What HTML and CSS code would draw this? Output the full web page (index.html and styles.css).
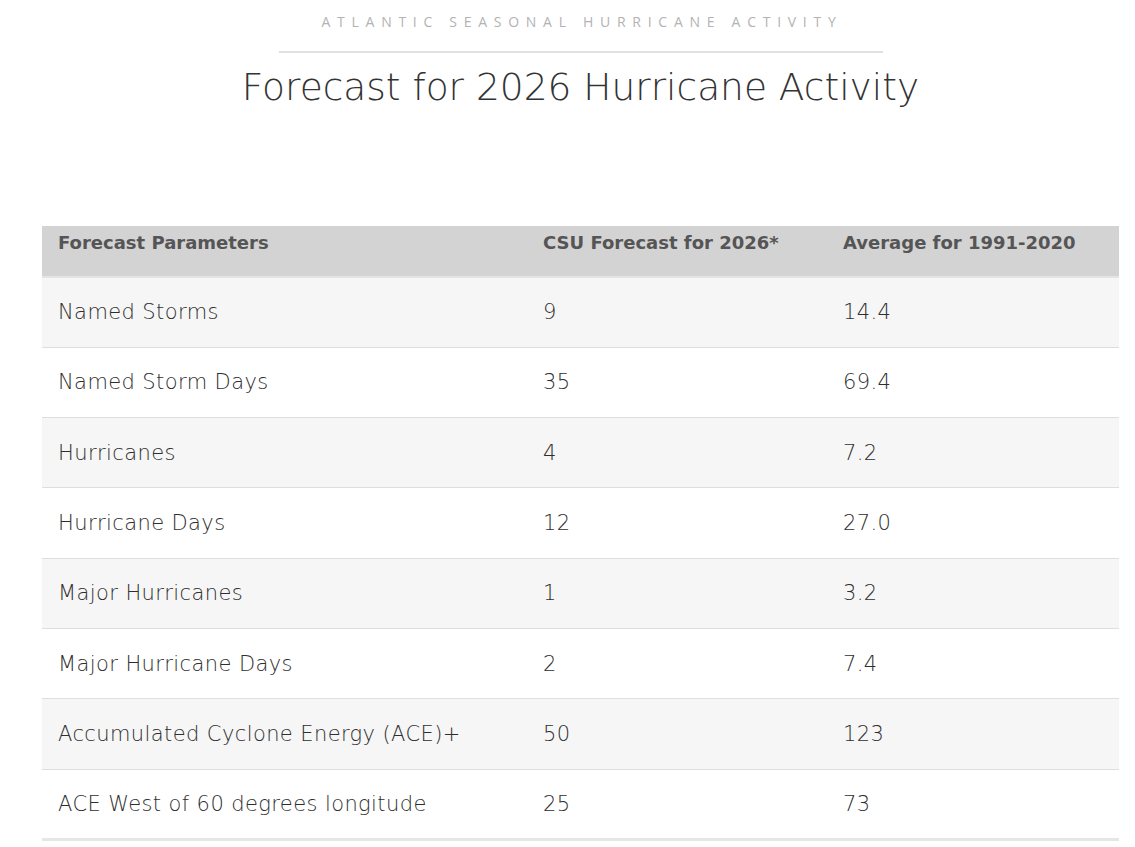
FILE: index.html
```html
<!DOCTYPE html>
<html lang="en">
<head>
<meta charset="utf-8">
<title>Forecast for 2026 Hurricane Activity</title>
<link rel="stylesheet" href="styles.css">
</head>
<body>
<main class="page">
  <header class="intro">
    <p class="eyebrow">Atlantic Seasonal Hurricane Activity</p>
    <hr class="rule">
    <h1 class="title">Forecast for 2026 Hurricane Activity</h1>
  </header>
  <table class="forecast">
    <thead>
      <tr>
        <th class="c1">Forecast Parameters</th>
        <th class="c2">CSU Forecast for 2026*</th>
        <th class="c3">Average for 1991-2020</th>
      </tr>
    </thead>
    <tbody>
      <tr><td>Named Storms</td><td>9</td><td>14.4</td></tr>
      <tr><td>Named Storm Days</td><td>35</td><td>69.4</td></tr>
      <tr><td>Hurricanes</td><td>4</td><td>7.2</td></tr>
      <tr><td>Hurricane Days</td><td>12</td><td>27.0</td></tr>
      <tr><td>Major Hurricanes</td><td>1</td><td>3.2</td></tr>
      <tr><td>Major Hurricane Days</td><td>2</td><td>7.4</td></tr>
      <tr><td>Accumulated Cyclone Energy (ACE)+</td><td>50</td><td>123</td></tr>
      <tr><td>ACE West of 60 degrees longitude</td><td>25</td><td>73</td></tr>
    </tbody>
  </table>
</main>
</body>
</html>
```
FILE: styles.css
```css
* { box-sizing: border-box; }
html, body { margin: 0; padding: 0; background: #fff; }
body {
  font-family: "DejaVu Sans", "Open Sans", sans-serif;
  color: #444;
}
.page {
  padding: 0 16px 0 42px;
}
.intro {
  display: flex;
  flex-direction: column;
  align-items: center;
  padding-top: 12px;
}
.eyebrow {
  margin: 0;
  font-family: "Open Sans", sans-serif;
  font-size: 14px;
  line-height: 20px;
  font-weight: 400;
  letter-spacing: 6.72px;
  text-transform: uppercase;
  color: #b3b3b3;
  padding-left: 3px;
}
.rule {
  width: 604px;
  height: 2px;
  border: 0;
  background: #e0e0e0;
  margin: 19px 0 0;
}
.title {
  margin: 7px 0 0;
  font-size: 37.5px;
  line-height: 54px;
  font-weight: 300;
  color: #333;
}
.forecast {
  width: 100%;
  margin-top: 112px;
  border-collapse: collapse;
  border-bottom: 3px solid #e6e6e6;
}
.forecast th {
  background: #d3d3d3;
  text-align: left;
  font-size: 18px;
  font-weight: 700;
  color: #555;
  line-height: 28px;
  padding: 3px 16px 19px;
  border-bottom: 2px solid #e4e4e4;
}
.forecast .c1 { width: 485px; }
.forecast .c2 { width: 300px; }
.forecast td {
  font-size: 21px;
  letter-spacing: 0.4px;
  font-weight: 300;
  color: #2e2e2e;
  height: 70.3px;
  padding: 0 16px;
  border-bottom: 1px solid #dedede;
  vertical-align: middle;
}
.forecast tbody tr:nth-child(odd) td { background: #f6f6f6; }
.forecast tbody tr:last-child td { border-bottom: 0; }
```
